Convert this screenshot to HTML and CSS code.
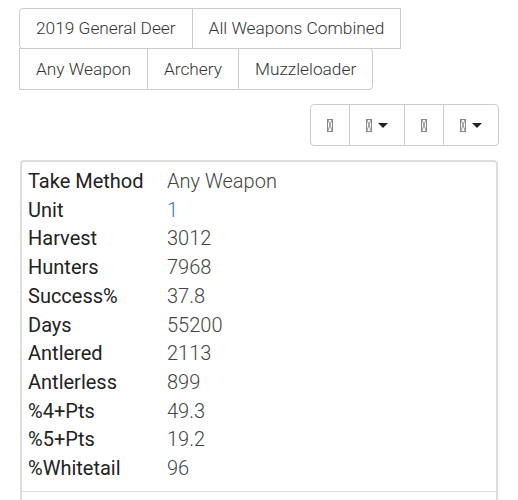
FILE: index.html
```html
<!DOCTYPE html>
<html lang="en">
<head>
    <meta charset="UTF-8">
    <meta name="viewport" content="width=device-width, initial-scale=1.0">
    <title>2019 General Deer</title>
    <link rel="stylesheet" href="styles.css">
</head>
<body>
    <div class="page">
        <div class="btn-group first-group">
            <button class="btn">2019 General Deer</button>
            <button class="btn">All Weapons Combined</button>
        </div>
        <div class="btn-group second-group">
            <button class="btn">Any Weapon</button>
            <button class="btn">Archery</button>
            <button class="btn">Muzzleloader</button>
        </div>

        <div class="toolbar">
            <div class="btn-group icon-group">
                <button class="btn icon-btn"><span class="tofu"></span></button>
                <button class="btn icon-btn"><span class="tofu"></span><span class="caret"></span></button>
                <button class="btn icon-btn"><span class="tofu"></span></button>
                <button class="btn icon-btn"><span class="tofu"></span><span class="caret"></span></button>
            </div>
        </div>

        <div class="card">
            <div class="card-item">
                <div class="label">Take Method</div><div class="value">Any Weapon</div>
                <div class="label">Unit</div><div class="value"><a class="link" href="#">1</a></div>
                <div class="label">Harvest</div><div class="value">3012</div>
                <div class="label">Hunters</div><div class="value">7968</div>
                <div class="label">Success%</div><div class="value">37.8</div>
                <div class="label">Days</div><div class="value">55200</div>
                <div class="label">Antlered</div><div class="value">2113</div>
                <div class="label">Antlerless</div><div class="value">899</div>
                <div class="label">%4+Pts</div><div class="value">49.3</div>
                <div class="label">%5+Pts</div><div class="value">19.2</div>
                <div class="label">%Whitetail</div><div class="value">96</div>
            </div>
            <div class="card-item next-item"></div>
        </div>
    </div>
</body>
</html>
```

FILE: styles.css
```css
body {
    margin: 0;
    font-family: Roboto, "Liberation Sans", sans-serif;
    background: #ffffff;
    overflow: hidden;
}

.page {
    width: 480px;
    padding: 8px 0 0 19px;
}

.btn-group {
    display: flex;
}

.btn {
    font-family: inherit;
    font-size: 17.3px;
    font-weight: 300;
    line-height: 25px;
    color: #333333;
    background: #ffffff;
    border: 1px solid #cccccc;
    padding: 7px 16px;
    margin: 0 0 0 -1px;
    border-radius: 0;
    cursor: pointer;
}

.btn:first-child {
    margin-left: 0;
}

.first-group .btn:first-child {
    border-radius: 4px 0 0 4px;
}

.second-group {
    margin-top: -1px;
}

.second-group .btn {
    padding-top: 8px;
}

.second-group .btn:last-child {
    border-radius: 0 4px 4px 0;
}

.toolbar {
    display: flex;
    justify-content: flex-end;
    margin-top: 14px;
}

.icon-btn {
    display: flex;
    align-items: center;
    gap: 6px;
    height: 42px;
    padding: 0 16px;
}

.icon-group .btn:first-child {
    border-radius: 4px 0 0 4px;
}

.icon-group .btn:last-child {
    border-radius: 0 4px 4px 0;
}

/* квадратик «нет глифа» как в оригинале */
.tofu {
    position: relative;
    display: inline-block;
    width: 4px;
    height: 11px;
    border: 1px solid #888888;
    overflow: hidden;
}

.tofu::before,
.tofu::after {
    content: "";
    position: absolute;
    left: 50%;
    top: 50%;
    width: 1px;
    height: 13px;
    background: #999999;
}

.tofu::before {
    transform: translate(-50%, -50%) rotate(20deg);
}

.tofu::after {
    transform: translate(-50%, -50%) rotate(-20deg);
}

.caret {
    width: 0;
    height: 0;
    border-left: 5px solid transparent;
    border-right: 5px solid transparent;
    border-top: 5px solid #222222;
}

.card {
    margin: 14px 1px 0 1px;
    border: 2px solid #dddddd;
    border-bottom: none;
    border-radius: 4px 4px 0 0;
    height: 400px;
}

.card-item {
    display: grid;
    grid-template-columns: 139px 1fr;
    padding: 5px 6px 8px 6px;
    font-size: 20px;
    line-height: 28.7px;
}

.next-item {
    border-top: 1px solid #dddddd;
    height: 40px;
    padding: 0;
}

.label {
    color: #222222;
}

.value {
    color: #444444;
    font-weight: 300;
}

.link {
    color: #337ab7;
    text-decoration: none;
}
```
